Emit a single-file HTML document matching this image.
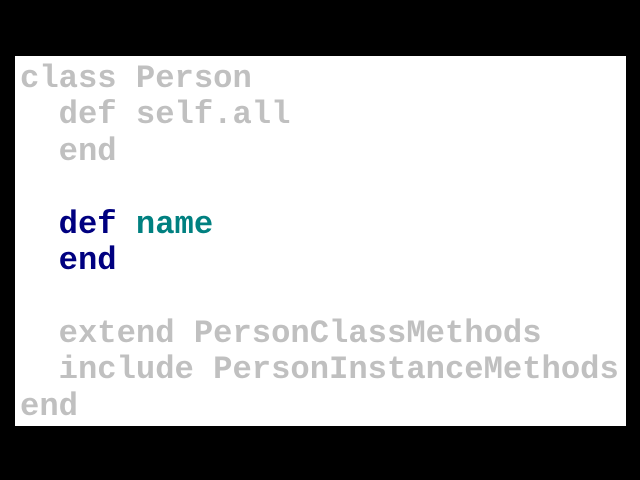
<!DOCTYPE html>
<html><head><style>
html,body{margin:0;padding:0;background:#000;width:640px;height:480px;overflow:hidden}
.box{position:absolute;left:15px;top:56px;width:611px;height:370px;background:#fff}
pre{position:absolute;left:20px;top:61px;margin:0;font-family:"Liberation Mono",monospace;font-weight:bold;font-size:32.2px;line-height:36.4px;color:#c0c0c0}
.k{color:#000080}.n{color:#008080}
</style></head><body>
<div class="box"></div>
<pre>class Person
  def self.all
  end

  <span class="k">def</span> <span class="n">name</span>
  <span class="k">end</span>

  extend PersonClassMethods
  include PersonInstanceMethods
end</pre>
</body></html>
